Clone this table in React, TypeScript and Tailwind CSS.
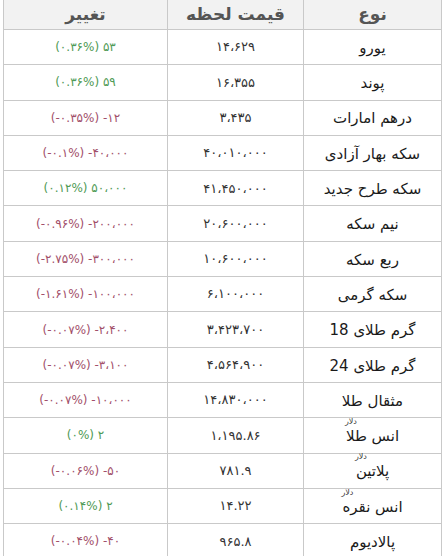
import React from "react";

type Row = {
  name: string;
  unit?: boolean;
  price: string;
  change: string;
  up: boolean;
};

const ROWS: Row[] = [
  { name: "یورو", price: "۱۴،۶۲۹", change: "(۰.۳۶%) ۵۳", up: true },
  { name: "پوند", price: "۱۶،۳۵۵", change: "(۰.۳۶%) ۵۹", up: true },
  { name: "درهم امارات", price: "۳،۴۳۵", change: "(-۰.۳۵%) -۱۲", up: false },
  { name: "سکه بهار آزادی", price: "۴۰،۰۱۰،۰۰۰", change: "(-۰.۱%) -۴۰،۰۰۰", up: false },
  { name: "سکه طرح جدید", price: "۴۱،۴۵۰،۰۰۰", change: "(۰.۱۲%) ۵۰،۰۰۰", up: true },
  { name: "نیم سکه", price: "۲۰،۶۰۰،۰۰۰", change: "(-۰.۹۶%) -۲۰۰،۰۰۰", up: false },
  { name: "ربع سکه", price: "۱۰،۶۰۰،۰۰۰", change: "(-۲.۷۵%) -۳۰۰،۰۰۰", up: false },
  { name: "سکه گرمی", price: "۶،۱۰۰،۰۰۰", change: "(-۱.۶۱%) -۱۰۰،۰۰۰", up: false },
  { name: "گرم طلای 18", price: "۳،۴۲۳،۷۰۰", change: "(-۰.۰۷%) -۲،۴۰۰", up: false },
  { name: "گرم طلای 24", price: "۴،۵۶۴،۹۰۰", change: "(-۰.۰۷%) -۳،۱۰۰", up: false },
  { name: "مثقال طلا", price: "۱۴،۸۳۰،۰۰۰", change: "(-۰.۰۷%) -۱۰،۰۰۰", up: false },
  { name: "انس طلا", unit: true, price: "۱،۱۹۵.۸۶", change: "(۰%) ۲", up: true },
  { name: "پلاتین", unit: true, price: "۷۸۱.۹", change: "(-۰.۰۶%) -۵۰", up: false },
  { name: "انس نقره", unit: true, price: "۱۴.۲۲", change: "(۰.۱۴%) ۲", up: true },
  { name: "پالادیوم", price: "۹۶۵.۸", change: "(-۰.۰۴%) -۴۰", up: false },
];

export default function App() {
  return (
    <div
      className="w-[443px] h-[556px] overflow-hidden bg-white"
      style={{ fontFamily: '"DejaVu Sans", "Noto Sans", sans-serif' }}
    >
      <div className="ml-[3px] w-[439px] border-x border-[#c9c9c9]">
        <div className="flex h-[30px] border-b border-[#c9c9c9] bg-[#f2f2f2] text-[17px] font-bold text-[#555]">
          <div className="w-[163px] flex items-center justify-center" dir="rtl">تغییر</div>
          <div className="w-[136px] flex items-center justify-center border-l border-[#c9c9c9]" dir="rtl">
            قیمت لحظه
          </div>
          <div className="flex-1 flex items-center justify-center border-l border-[#c9c9c9]" dir="rtl">
            نوع
          </div>
        </div>
        {ROWS.map((r) => (
          <div key={r.name} className="flex h-[35.3px] border-b border-[#c9c9c9]">
            <div
              className={`w-[163px] flex items-center justify-center text-[12px] ${
                r.up ? "text-[#4f9a55]" : "text-[#a24f6a]"
              }`}
            >
              <span dir="ltr">{r.change}</span>
            </div>
            <div className="w-[136px] flex items-center justify-center border-l border-[#c9c9c9] text-[13px] text-[#333]">
              <span dir="ltr">{r.price}</span>
            </div>
            <div
              className="flex-1 flex items-center justify-center border-l border-[#c9c9c9] text-[15px] text-[#1a1a1a] pt-[2px]"
              dir="rtl"
            >
              <span className="relative">
                {r.name}
                {r.unit && (
                  <span className="absolute left-[-1px] top-[-7px] text-[8px] leading-none text-[#333]">
                    دلار
                  </span>
                )}
              </span>
            </div>
          </div>
        ))}
      </div>
    </div>
  );
}
